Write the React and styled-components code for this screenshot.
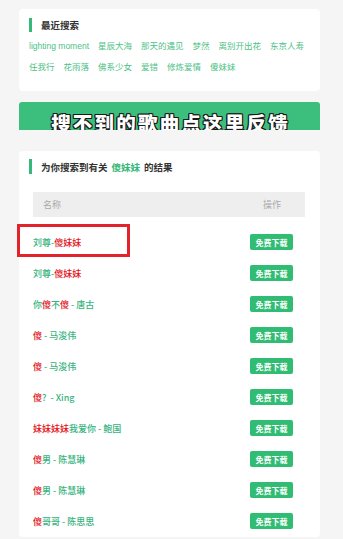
import React from "react";
import styled, { createGlobalStyle } from "styled-components";

const Global = createGlobalStyle`
  html, body { margin: 0; padding: 0; background: #f5f5f5; }
  body { font-family: "Noto Sans CJK SC", "Noto Sans", sans-serif; }
  * { box-sizing: border-box; }
`;

const Page = styled.div`
  padding: 9px 23px 0 19px;
  min-height: 539px;
  background: #f5f5f5;
`;

const Card = styled.section`
  background: #fff;
  border-radius: 4px;
  padding: ${(p) => p.$pad};
  margin-top: ${(p) => p.$mt || 0}px;
`;

const Heading = styled.div`
  display: flex;
  align-items: center;
  height: ${(p) => p.$h}px;
  font-size: 9.5px;
  font-weight: 600;
  color: #333;
  &::before {
    content: "";
    width: 3px;
    height: 100%;
    background: #36b879;
    margin-right: 9px;
  }
`;

const Hl = styled.span`
  color: #36b879;
  margin: 0 4px;
`;

const Tags = styled.div`
  display: flex;
  flex-wrap: wrap;
  column-gap: 9px;
  margin-top: 4px;
`;

const Tag = styled.span`
  font-family: "Liberation Sans", "Noto Sans CJK SC", sans-serif;
  font-size: 8.5px;
  line-height: 21px;
  color: #4fbf88;
  white-space: nowrap;
`;

const Banner = styled.div`
  margin-top: 11px;
  height: 28px;
  background: #3cbf7c;
  border-radius: 3px 3px 0 0;
  overflow: hidden;
  text-align: center;
  padding-top: 10px;
  padding-left: 2px;
`;

const BannerText = styled.span`
  font-size: 19.5px;
  line-height: 22px;
  font-weight: 900;
  letter-spacing: 2.2px;
  color: #fff;
  text-shadow: 1px 0 0 #1a1a1a, -1px 0 0 #1a1a1a, 0 1px 0 #1a1a1a, 0 -1px 0 #1a1a1a,
    1px 1px 0 #1a1a1a, -1px -1px 0 #1a1a1a, 1px -1px 0 #1a1a1a, -1px 1px 0 #1a1a1a;
`;

const Table = styled.div`
  margin: 18px 5px 0 4px;
`;

const HeadRow = styled.div`
  display: flex;
  justify-content: space-between;
  align-items: center;
  height: 25px;
  background: #eeeeee;
  padding: 0 24px 0 10px;
  font-size: 9px;
  color: #aaa;
  margin-bottom: 9.5px;
`;

const Row = styled.div`
  position: relative;
  display: flex;
  justify-content: space-between;
  align-items: center;
  height: 31px;
  padding-right: 12px;
`;

const Name = styled.span`
  font-size: 9px;
  font-weight: 500;
  color: #36b37e;
  white-space: pre;
`;

const Red = styled.span`
  color: #e3141c;
`;

const DlButton = styled.span`
  display: flex;
  align-items: center;
  justify-content: center;
  width: 43px;
  height: 16px;
  border-radius: 2px;
  background: #30bd73;
  color: #fff;
  font-size: 8px;
  font-weight: 700;
`;

const Marker = styled.div`
  position: absolute;
  left: -16px;
  top: -3px;
  width: 113px;
  height: 33px;
  border: 3px solid #e2232b;
  pointer-events: none;
`;

const recent = [
  "lighting moment",
  "星辰大海",
  "那天的遇见",
  "梦然",
  "离别开出花",
  "东京人寿",
  "任我行",
  "花雨落",
  "佛系少女",
  "爱错",
  "修炼爱情",
  "傻妹妹",
];

const rows = [
  [["刘尊-", 0], ["傻妹妹", 1]],
  [["刘尊-", 0], ["傻妹妹", 1]],
  [["你", 0], ["傻", 1], ["不", 0], ["傻", 1], [" - 唐古", 0]],
  [["傻", 1], [" - 马浚伟", 0]],
  [["傻", 1], [" - 马浚伟", 0]],
  [["傻", 1], ["?  - Xing", 0]],
  [["妹妹妹妹", 1], ["我爱你 - 鲍国", 0]],
  [["傻", 1], ["男 - 陈慧琳", 0]],
  [["傻", 1], ["男 - 陈慧琳", 0]],
  [["傻", 1], ["哥哥 - 陈思思", 0]],
];

export default function App() {
  return (
    <>
      <Global />
      <Page>
        <Card $pad="9px 10px 13px 10px">
          <Heading $h={14}>最近搜索</Heading>
          <Tags>
            {recent.map((t) => (
              <Tag key={t}>{t}</Tag>
            ))}
          </Tags>
        </Card>
        <Banner>
          <BannerText>搜不到的歌曲点这里反馈</BannerText>
        </Banner>
        <Card $pad="8px 10px 0 10px" $mt={21}>
          <Heading $h={15}>
            为你搜索到有关<Hl>傻妹妹</Hl>的结果
          </Heading>
          <Table>
            <HeadRow>
              <span>名称</span>
              <span>操作</span>
            </HeadRow>
            {rows.map((r, i) => (
              <Row key={i}>
                {i === 0 && <Marker />}
                <Name>
                  {r.map(([t, red], j) =>
                    red ? <Red key={j}>{t}</Red> : <React.Fragment key={j}>{t}</React.Fragment>
                  )}
                </Name>
                <DlButton>免费下载</DlButton>
              </Row>
            ))}
          </Table>
        </Card>
      </Page>
    </>
  );
}
